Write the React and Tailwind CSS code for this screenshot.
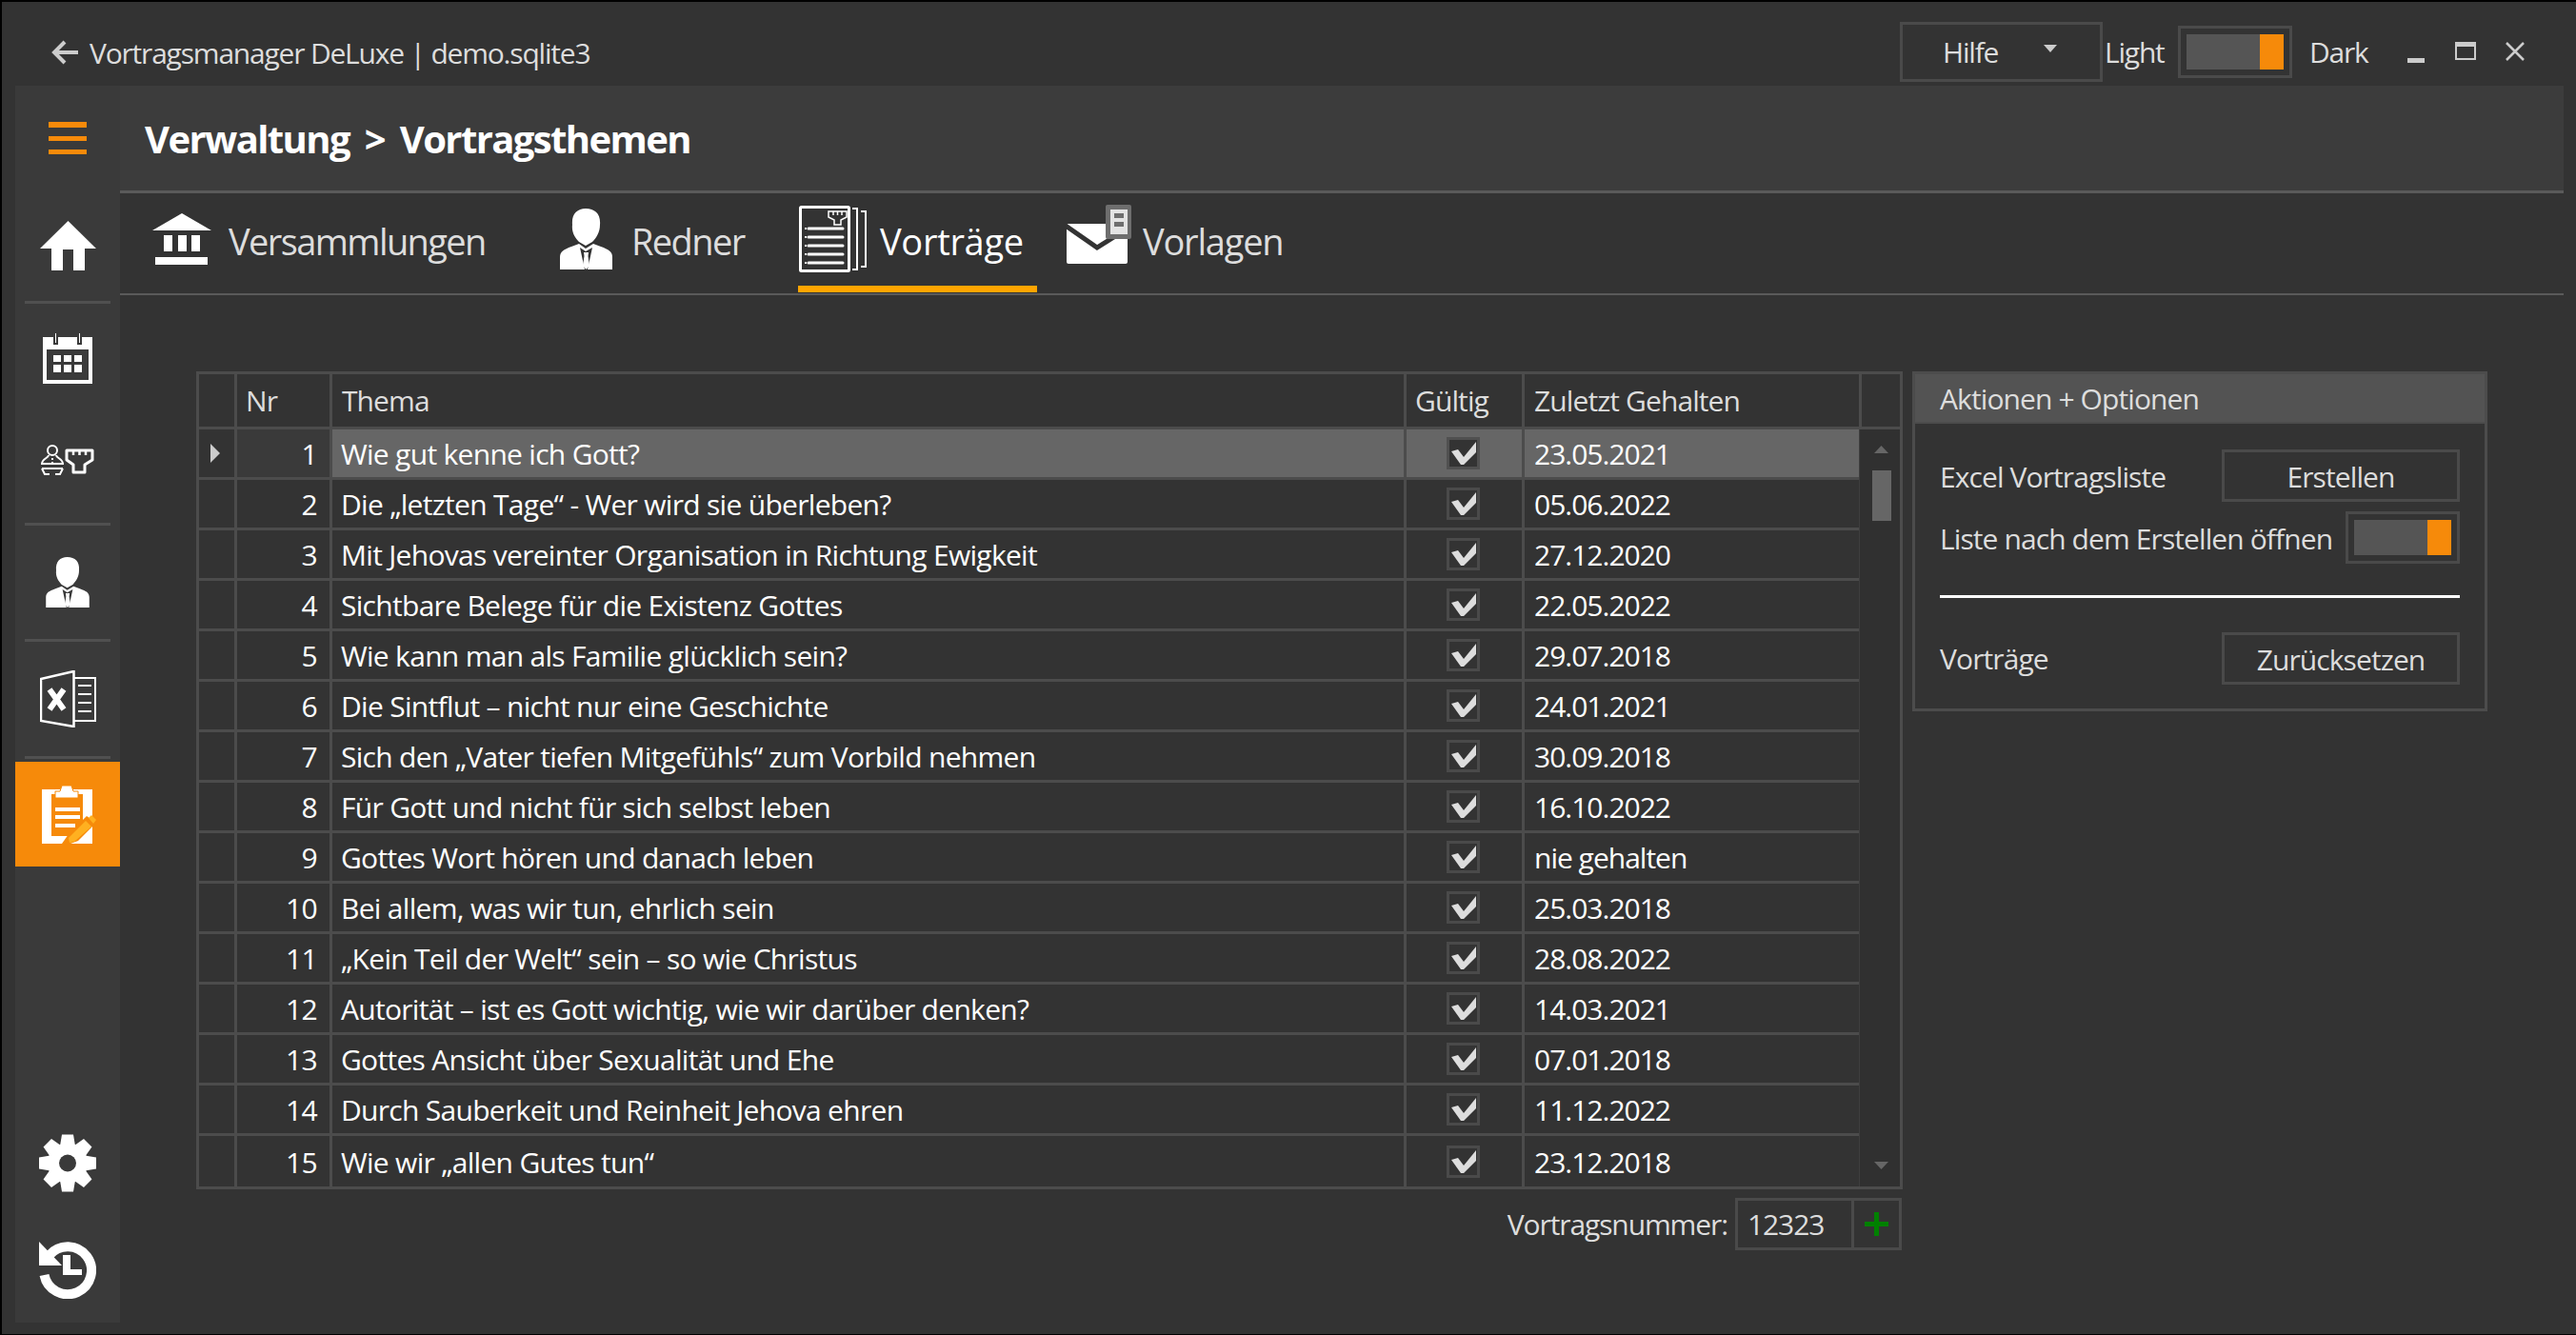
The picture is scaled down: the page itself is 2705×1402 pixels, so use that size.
import React from 'react';

const rows = [
  ['1', 'Wie gut kenne ich Gott?', '23.05.2021'],
  ['2', 'Die „letzten Tage“ - Wer wird sie überleben?', '05.06.2022'],
  ['3', 'Mit Jehovas vereinter Organisation in Richtung Ewigkeit', '27.12.2020'],
  ['4', 'Sichtbare Belege für die Existenz Gottes', '22.05.2022'],
  ['5', 'Wie kann man als Familie glücklich sein?', '29.07.2018'],
  ['6', 'Die Sintflut – nicht nur eine Geschichte', '24.01.2021'],
  ['7', 'Sich den „Vater tiefen Mitgefühls“ zum Vorbild nehmen', '30.09.2018'],
  ['8', 'Für Gott und nicht für sich selbst leben', '16.10.2022'],
  ['9', 'Gottes Wort hören und danach leben', 'nie gehalten'],
  ['10', 'Bei allem, was wir tun, ehrlich sein', '25.03.2018'],
  ['11', '„Kein Teil der Welt“ sein – so wie Christus', '28.08.2022'],
  ['12', 'Autorität – ist es Gott wichtig, wie wir darüber denken?', '14.03.2021'],
  ['13', 'Gottes Ansicht über Sexualität und Ehe', '07.01.2018'],
  ['14', 'Durch Sauberkeit und Reinheit Jehova ehren', '11.12.2022'],
  ['15', 'Wie wir „allen Gutes tun“', '23.12.2018'],
];

function HomeIcon() {
  return (
    <svg width="59" height="52" viewBox="0 0 59 52" fill="#fff">
      <polygon points="29.5,0 59,29 47,29 47,52 35,52 35,30 24,30 24,52 12,52 12,29 0,29" />
    </svg>
  );
}

function CalendarIcon() {
  return (
    <svg width="52" height="54" viewBox="0 0 52 54" fill="#fff">
      <path d="M0 5h52v49H0z M4 18v32h44V18z" fillRule="evenodd" />
      <path d="M12 0h3v12h-3z M37 0h3v12h-3z" stroke="#3a3a3a" strokeWidth="2" />
      <path d="M11 24h8v7h-8z M22 24h8v7h-8z M33 24h8v7h-8z M11 34h8v8h-8z M22 34h8v8h-8z M33 34h8v8h-8z" />
    </svg>
  );
}

function WorkerIcon() {
  return (
    <svg width="56" height="32" viewBox="0 0 56 32" fill="none" stroke="#fff" strokeWidth="2">
      <circle cx="12" cy="6" r="5" />
      <path d="M8 11c0 3-7 4-7 9h22c0-5-7-6-7-9" />
      <path d="M12 14v2 M12 18v2 M1 25H23 M1 25l3 6h5 M23 25l-3 6h-5" />
      <path d="M27 6H54V16L46 21V29H34V21L27 16Z" strokeWidth="3" strokeLinejoin="round" />
      <path d="M34 6v5 M40.500 6v5 M47 6v5" strokeWidth="2.5" />
    </svg>
  );
}

function PersonIcon({ width, height, bg }) {
  return (
    <svg width={width} height={height} viewBox="0 0 55 64" fill="#fff">
      <path d="M27 0C37 0 43 6 42 17C42 25 38 31 34 35L27 39L20 35C16 31 12 25 13 17C12 6 18 0 27 0Z" />
      <path d="M0 64V51C0 45 4 43 12 40L20 37L27 42L35 37L43 40C51 43 55 45 55 51V64Z" />
      <path d="M21 41L26 64H29L34 41L27 45Z" fill={bg} />
      <path d="M25 46H30L29.5 50L31 60L27.5 64L24 60L25.5 50Z" />
    </svg>
  );
}

function ExcelIcon() {
  return (
    <svg width="59" height="60" viewBox="0 0 59 60" fill="none" stroke="#fff" strokeWidth="2.5">
      <path d="M1 9L35.500 1V59L1 53Z" />
      <path d="M36 8H58V53H36" strokeWidth="2" />
      <path d="M40 16H54 M40 25H54 M40 34H54 M40 43H54" strokeWidth="2" />
      <path d="M10 20L25 41 M25 20L10 41" strokeWidth="6" />
    </svg>
  );
}

function ClipboardIcon() {
  return (
    <svg width="57" height="61" viewBox="0 0 57 61">
      <path d="M0 4h53v57H0z" fill="#fff" />
      <path d="M10 9h33v44H10z" fill="#f68a0a" />
      <path d="M14 13V6h5l2-6h10l2 6h5v7z" fill="#fff" stroke="#f68a0a" strokeWidth="1" />
      <path d="M14 23h26v4H14z M14 31h26v4H14z M14 40h21v4H14z" fill="#fff" />
      <path d="M21 61L28 51L47 32L57 39L38 58L30 61Z" fill="#f68a0a" />
      <path d="M28 55L46 37L52 43L34 59L29 60Z" fill="#ffb020" />
      <path d="M49 34L52 31L57 36L54 40Z" fill="#ffb020" />
    </svg>
  );
}

function GearIcon() {
  return (
    <svg width="60" height="61" viewBox="0 0 60 60" fill="#fff">
      {[0, 45, 90, 135, 180, 225, 270, 315].map((a) => (
        <polygon key={a} points="24,0 36,0 38,12 22,12" transform={`rotate(${a} 30 30)`} />
      ))}
      <circle cx="30" cy="30" r="21" />
      <circle cx="30" cy="30" r="9" fill="#3a3a3a" />
    </svg>
  );
}

function HistoryIcon() {
  return (
    <svg width="60" height="60" viewBox="0 0 60 60" fill="#fff">
      <path d="M11 14A25 25 0 1 1 5.500 35" fill="none" stroke="#fff" strokeWidth="10" />
      <polygon points="0,0 0,25 24,25" />
      <path d="M25 14h8v15h12v6H25z" />
    </svg>
  );
}

function BankIcon() {
  return (
    <svg width="62" height="54" viewBox="0 0 62 54" fill="#fff">
      <polygon points="31,0 62,18 0,18" />
      <path d="M12 23h9v17h-9z M27 23h9v17h-9z M41 23h9v17h-9z M3 46h55v8H3z" />
    </svg>
  );
}

function TalkIcon() {
  return (
    <svg width="71" height="70" viewBox="0 0 71 70" fill="none" stroke="#fff">
      <rect x="1.500" y="1.500" width="51" height="67" rx="1" strokeWidth="3" />
      <path d="M56 3h5v64h-5 M65 6h5v58h-5" strokeWidth="2" />
      <path d="M10 24H46 M10 33H46 M10 42H46 M10 51H46 M10 60H46" strokeWidth="3" strokeLinecap="round" />
      <path d="M6 24h2 M6 33h2 M6 42h2 M6 51h2 M6 60h2" strokeWidth="2" />
      <path d="M31 6H50V12L44 15V20H37V15L31 12Z" strokeWidth="1.500" />
      <path d="M36 6v4 M40.500 6v4 M45 6v4" strokeWidth="1.500" />
    </svg>
  );
}

function MailIcon() {
  return (
    <svg width="68" height="63" viewBox="0 0 68 63">
      <rect x="0" y="20" width="64" height="42" rx="2" fill="#fff" />
      <path d="M-1 22L32 45L56 30" fill="none" stroke="#333" strokeWidth="5" />
      <rect x="41" y="0" width="27" height="36" rx="2" fill="#6e6e6e" />
      <rect x="46" y="5" width="18" height="26" fill="#e3e3e3" />
      <path d="M50 9h10v5H50z M50 18h10v5H50z" fill="#6e6e6e" />
    </svg>
  );
}

function CheckBox({ selected }) {
  return (
    <div className={`w-[35px] h-[34px] border-[3px] flex items-center justify-center ${selected ? 'border-[#505050] bg-[#333333]' : 'border-[#4a4a4a]'}`}>
      <svg width="26" height="24" viewBox="0 0 26 24" fill="#dddddd" className="shrink-0">
        <polygon points="0,10 7,8 13,16 26,0 26,11 13,24 10,24" />
      </svg>
    </div>
  );
}

function Toggle() {
  return (
    <div className="w-[120px] h-[55px] border-[3px] border-[#4a4a4a] p-[6px] shrink-0">
      <div className="h-full bg-[#555555] flex justify-end">
        <div className="w-[25px] h-full bg-[#f68a0a]" />
      </div>
    </div>
  );
}

function Separator() {
  return <div className="h-[3px] mx-[10px] bg-[#505050] shrink-0" />;
}

function Tab({ icon, label, active, className, tracking = 'tracking-[-1.6px]' }) {
  return (
    <div className={`h-full flex items-center relative ${className}`}>
      {icon}
      <span className={`text-[38px] pb-[5px] ${tracking} ${active ? 'text-white' : 'text-[#dddddd]'}`}>{label}</span>
      {active && <div className="absolute left-0 right-0 bottom-[1px] h-[7px] bg-[#ffa500]" />}
    </div>
  );
}

function ActionButton({ label }) {
  return (
    <div className="w-[250px] h-[55px] border-[3px] border-[#4a4a4a] flex items-center justify-center pt-[1px]">{label}</div>
  );
}

export default function App() {
  return (
    <div className="w-[2705px] h-[1402px] bg-black pt-[2px] pl-[2px] pb-[1px] overflow-hidden font-['Open_Sans',sans-serif] tracking-[-1.2px]">
      <div className="h-full bg-[#333333] flex flex-col">
        {/* Title bar */}
        <div className="h-[88px] shrink-0 flex items-center pt-[17px] text-[30px] text-[#dddddd]">
          <svg className="ml-[52px] mr-[12px] shrink-0" width="28" height="26" viewBox="0 0 28 26" fill="none" stroke="#cccccc" strokeWidth="4">
            <path d="M28 13H4 M14 2L3 13L14 24" />
          </svg>
          <span className="flex-1 pt-[2px]">Vortragsmanager DeLuxe | demo.sqlite3</span>
          <div className="w-[213px] h-[63px] border-[3px] border-[#4a4a4a] flex items-center pl-[42px]">
            <span className="w-[60px]">Hilfe</span>
            <svg className="ml-[46px] mb-[8px]" width="14" height="8" viewBox="0 0 14 8" fill="#cccccc">
              <polygon points="0,0 14,0 7,8" />
            </svg>
          </div>
          <span className="w-[79px] pl-[2px]">Light</span>
          <Toggle />
          <span className="w-[121px] pl-[18px]">Dark</span>
          <svg className="mt-[18px]" width="18" height="5"><rect width="18" height="5" fill="#cccccc" /></svg>
          <svg className="ml-[32px] mb-[2px]" width="22" height="19" fill="none" stroke="#cccccc" strokeWidth="2">
            <rect x="1" y="1" width="20" height="17" />
            <path d="M0 2.500H22" strokeWidth="5" />
          </svg>
          <svg className="ml-[31px] mr-[54px] mb-[2px]" width="20" height="20" fill="none" stroke="#cccccc" strokeWidth="2.500">
            <path d="M1 1L19 19 M19 1L1 19" />
          </svg>
        </div>

        <div className="flex-1 flex min-h-0">
          {/* Sidebar */}
          <div className="w-[110px] ml-[14px] mb-[12px] bg-[#3a3a3a] flex flex-col shrink-0">
            <div className="h-[110px] shrink-0 flex flex-col items-center justify-center gap-[9px]">
              <div className="w-[40px] h-[6px] bg-[#f68a0a]" />
              <div className="w-[40px] h-[5px] bg-[#f68a0a]" />
              <div className="w-[40px] h-[5px] bg-[#f68a0a]" />
            </div>
            <div className="h-[116px] shrink-0 flex items-center justify-center"><HomeIcon /></div>
            <Separator />
            <div className="h-[114px] shrink-0 flex items-center justify-center"><CalendarIcon /></div>
            <div className="h-[116px] pb-[16px] shrink-0 flex items-center justify-center"><WorkerIcon /></div>
            <Separator />
            <div className="h-[119px] shrink-0 flex items-center justify-center"><PersonIcon width={46} height={53} bg="#3a3a3a" /></div>
            <Separator />
            <div className="h-[120px] shrink-0 flex items-center justify-center"><ExcelIcon /></div>
            <Separator />
            <div className="h-[110px] mt-[3px] shrink-0 bg-[#f68a0a] flex items-center justify-center pl-[2px]"><ClipboardIcon /></div>
            <div className="flex-1" />
            <div className="h-[116px] flex items-center justify-center shrink-0"><GearIcon /></div>
            <div className="h-[110px] flex items-center justify-center shrink-0"><HistoryIcon /></div>
          </div>

          {/* Main */}
          <div className="w-[2566px] flex flex-col">
            <div className="h-[113px] shrink-0 bg-[#3c3c3c] border-b-[3px] border-[#5a5a5a] flex items-center pl-[26px] pt-[2px] text-[40px] tracking-[-1.6px] [word-spacing:7px] font-bold text-white">
              Verwaltung &gt; Vortragsthemen
            </div>
            <div className="h-[107px] shrink-0 border-b-[2px] border-[#5a5a5a] flex pl-[34px]">
              <Tab icon={<span className="flex mr-[18px] mb-[9px]"><BankIcon /></span>} label="Versammlungen" className="w-[428px]" />
              <Tab icon={<span className="flex mr-[20px] mb-[9px]"><PersonIcon width={55} height={64} bg="#333333" /></span>} label="Redner" className="w-[250px]" />
              <Tab icon={<span className="flex ml-[1px] mr-[14px] mb-[9px]"><TalkIcon /></span>} label="Vorträge" active tracking="tracking-[-0.3px]" className="w-[251px]" />
              <Tab icon={<span className="flex ml-[31px] mr-[12px] mb-[18px]"><MailIcon /></span>} label="Vorlagen" tracking="tracking-[-1.2px]" />
            </div>

            <div className="flex gap-[10px] pl-[80px] pt-[80px] items-start text-[30px]">
              <div className="w-[1792px] flex flex-col">
                {/* Table */}
                <div className="border-[3px] border-[#4c4c4c] w-full">
                  <div className="flex h-[58px] border-b-[3px] border-[#4c4c4c] text-[#dddddd] tracking-[-0.9px]">
                    <div className="w-[40px] border-r-[3px] border-[#4c4c4c]" />
                    <div className="w-[100px] border-r-[3px] border-[#4c4c4c] pl-[9px] flex items-center">Nr</div>
                    <div className="w-[1128px] border-r-[3px] border-[#4c4c4c] pl-[10px] flex items-center">Thema</div>
                    <div className="w-[124px] border-r-[3px] border-[#4c4c4c] pl-[9px] flex items-center">Gültig</div>
                    <div className="w-[354px] border-r-[3px] border-[#4c4c4c] pl-[10px] flex items-center">Zuletzt Gehalten</div>
                    <div className="flex-1" />
                  </div>
                  <div className="flex tracking-[-0.7px]">
                    <div className="w-[1743px]">
                      {rows.map(([nr, title, date], i) => {
                        const selected = i === 0;
                        return (
                          <div key={nr} className={`flex h-[53px] text-white ${i < rows.length - 1 ? 'border-b-[3px]' : ''} border-[#4c4c4c]`}>
                            <div className="w-[40px] border-r-[3px] border-[#4c4c4c] flex items-center justify-center pr-[4px]">
                              {selected && (
                                <svg width="10" height="20" viewBox="0 0 10 20" fill="#cccccc"><polygon points="0,0 10,10 0,20" /></svg>
                              )}
                            </div>
                            <div className={`w-[100px] border-r-[3px] border-[#4c4c4c] flex items-center justify-end pr-[13px] pt-[1px] ${selected ? 'bg-[#3a3a3a]' : ''}`}>{nr}</div>
                            <div className={`w-[1128px] border-r-[3px] border-[#4c4c4c] pl-[9px] pt-[1px] flex items-center ${selected ? 'bg-[#666666]' : ''}`}>{title}</div>
                            <div className={`w-[124px] border-r-[3px] border-[#4c4c4c] flex items-center justify-center pr-[2px] ${selected ? 'bg-[#666666]' : ''}`}><CheckBox selected={selected} /></div>
                            <div className={`flex-1 pl-[10px] pt-[1px] flex items-center tracking-[-1px] ${selected ? 'bg-[#666666]' : ''}`}>{date}</div>
                          </div>
                        );
                      })}
                    </div>
                    {/* Scrollbar */}
                    <div className="flex-1 bg-[#303030] border-l-[1px] border-[#3e3e3e] flex flex-col items-center pt-[17px] pl-[3px]">
                      <svg width="15" height="8" viewBox="0 0 15 8" fill="#666666"><polygon points="7.500,0 15,8 0,8" /></svg>
                      <div className="w-[20px] h-[53px] bg-[#666666] mt-[18px]" />
                      <div className="flex-1" />
                      <svg className="mb-[18px]" width="15" height="8" viewBox="0 0 15 8" fill="#666666"><polygon points="0,0 15,0 7.500,8" /></svg>
                    </div>
                  </div>
                </div>

                <div className="flex items-center justify-end h-[55px] mt-[9px] pr-[1px] text-[#dddddd] tracking-[-1.1px]">
                  <span className="mr-[8px]">Vortragsnummer:</span>
                  <div className="w-[125px] h-full border-[3px] border-[#4a4a4a] flex items-center pl-[10px]">12323</div>
                  <div className="w-[50px] h-full border-[3px] border-l-0 border-[#4a4a4a] flex items-center justify-center">
                    <svg width="25" height="25" viewBox="0 0 25 25" fill="#008000"><path d="M10 0h5v10h10v5H15v10h-5V15H0v-5h10z" /></svg>
                  </div>
                </div>
              </div>

              {/* Actions panel */}
              <div className="w-[604px] h-[357px] border-[3px] border-[#4c4c4c] text-[#dddddd] tracking-[-0.9px]">
                <div className="h-[52px] bg-[#535353] border-b-[2px] border-[#4c4c4c] flex items-center pl-[26px]">Aktionen + Optionen</div>
                <div className="px-[26px] pt-[27px]">
                  <div className="flex items-center justify-between">
                    <span className="pt-[2px]">Excel Vortragsliste</span>
                    <ActionButton label="Erstellen" />
                  </div>
                  <div className="flex items-center justify-between mt-[10px]">
                    <span className="pt-[2px]">Liste nach dem Erstellen öffnen</span>
                    <Toggle />
                  </div>
                  <div className="h-[3px] bg-white mt-[33px]" />
                  <div className="flex items-center justify-between mt-[36px]">
                    <span>Vorträge</span>
                    <ActionButton label="Zurücksetzen" />
                  </div>
                </div>
              </div>
            </div>
          </div>
        </div>
      </div>
    </div>
  );
}
